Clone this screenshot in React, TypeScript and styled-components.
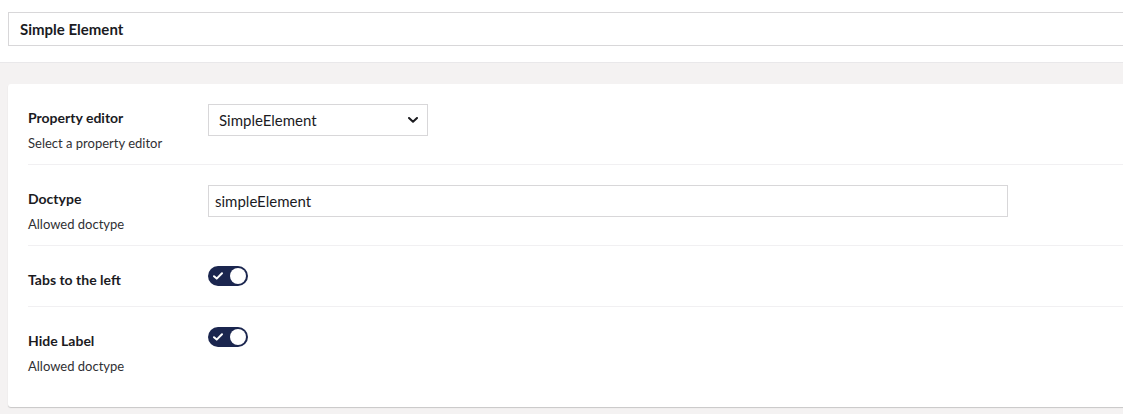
import React from "react";
import styled, {createGlobalStyle} from "styled-components";

const GlobalStyle = createGlobalStyle`
  html, body {
    margin: 0;
    padding: 0;
    overflow: hidden;
    background: #f4f2f2;
    font-family: Lato, "Noto Sans", "Liberation Sans", sans-serif;
    color: #1b1b1f;
  }
`;

const S = {
    Page: styled.div`
      width: 1123px;
      height: 414px;
      display: flex;
      flex-direction: column;
      overflow: hidden;
    `,
    Header: styled.header`
      background: #fff;
      padding: 12px 0 0 8px;
      height: 50px;
      border-bottom: 1px solid #e9e8ea;
    `,
    NameBox: styled.div`
      height: 32px;
      margin-right: -20px;
      border: 1px solid #d8d7d9;
      padding: 0 11px;
      display: flex;
      align-items: center;
      font-size: 15px;
      font-weight: 700;
      color: #1b1b1f;
    `,
    Body: styled.main`
      flex: 1;
      padding: 21px 0 0 8px;
    `,
    Card: styled.section`
      background: #fff;
      border-radius: 3px;
      box-shadow: 0 1px 1px rgba(0, 0, 0, 0.18);
      margin-right: -20px;
      padding: 0 0 20px 20px;
    `,
    Row: styled.div<{ $tall?: boolean; $last?: boolean }>`
      display: grid;
      grid-template-columns: 180px 1fr;
      padding-top: 20px;
      min-height: ${p => (p.$tall ? 60 : 40)}px;
      border-bottom: ${p => (p.$last ? "none" : "1px solid #f1f0f2")};
    `,
    Label: styled.div`
      padding-top: 4px;
      line-height: 20px;
      font-size: 14px;
      font-weight: 700;
      color: #1b1b1f;
    `,
    Description: styled.div`
      margin-top: 5px;
      line-height: 20px;
      font-size: 13px;
      color: #303033;
    `,
    Editor: styled.div`
      display: flex;
      align-items: flex-start;
    `,
    Select: styled.div`
      width: 220px;
      height: 32px;
      box-sizing: border-box;
      border: 1px solid #d8d7d9;
      padding: 0 5px 0 10px;
      display: flex;
      align-items: center;
      justify-content: space-between;
      font-size: 15px;
      color: #1b1b1f;
    `,
    TextInput: styled.div`
      width: 800px;
      height: 32px;
      box-sizing: border-box;
      border: 1px solid #d8d7d9;
      padding: 0 6px;
      display: flex;
      align-items: center;
      font-size: 15px;
      color: #1b1b1f;
    `,
    Toggle: styled.div<{ $on?: boolean }>`
      width: 40px;
      height: 20px;
      box-sizing: border-box;
      border-radius: 10px;
      background: ${p => (p.$on ? "#1b264f" : "#d8d7d9")};
      display: flex;
      align-items: center;
      justify-content: space-between;
      padding: 0 2px 0 5px;
    `,
    Knob: styled.span`
      width: 16px;
      height: 16px;
      border-radius: 50%;
      background: #fff;
    `,
}

const Chevron = () => (
    <svg width="10" height="6" viewBox="0 0 10 6" style={{marginRight: 4}}>
        <path d="M1 1 L5 4.8 L9 1" fill="none" stroke="#1b1b1f" strokeWidth="2" strokeLinecap="round" strokeLinejoin="round"/>
    </svg>
)

const Check = () => (
    <svg width="10" height="8" viewBox="0 0 10 8">
        <path d="M1 4.2 L3.7 6.6 L9 1.2" fill="none" stroke="#fff" strokeWidth="2" strokeLinecap="round" strokeLinejoin="round"/>
    </svg>
)

const Switch: React.FC<{ on?: boolean }> = ({on}) => (
    <S.Toggle $on={on}>
        <Check/>
        <S.Knob/>
    </S.Toggle>
)

export default function App() {
    return (
        <S.Page>
            <GlobalStyle/>
            <S.Header>
                <S.NameBox>Simple Element</S.NameBox>
            </S.Header>
            <S.Body>
                <S.Card>
                    <S.Row $tall>
                        <div>
                            <S.Label>Property editor</S.Label>
                            <S.Description>Select a property editor</S.Description>
                        </div>
                        <S.Editor>
                            <S.Select>
                                <span>SimpleElement</span>
                                <Chevron/>
                            </S.Select>
                        </S.Editor>
                    </S.Row>
                    <S.Row $tall>
                        <div>
                            <S.Label>Doctype</S.Label>
                            <S.Description>Allowed doctype</S.Description>
                        </div>
                        <S.Editor>
                            <S.TextInput>simpleElement</S.TextInput>
                        </S.Editor>
                    </S.Row>
                    <S.Row>
                        <div>
                            <S.Label>Tabs to the left</S.Label>
                        </div>
                        <S.Editor>
                            <Switch on/>
                        </S.Editor>
                    </S.Row>
                    <S.Row $tall $last>
                        <div>
                            <S.Label>Hide Label</S.Label>
                            <S.Description>Allowed doctype</S.Description>
                        </div>
                        <S.Editor>
                            <Switch on/>
                        </S.Editor>
                    </S.Row>
                </S.Card>
            </S.Body>
        </S.Page>
    )
}
